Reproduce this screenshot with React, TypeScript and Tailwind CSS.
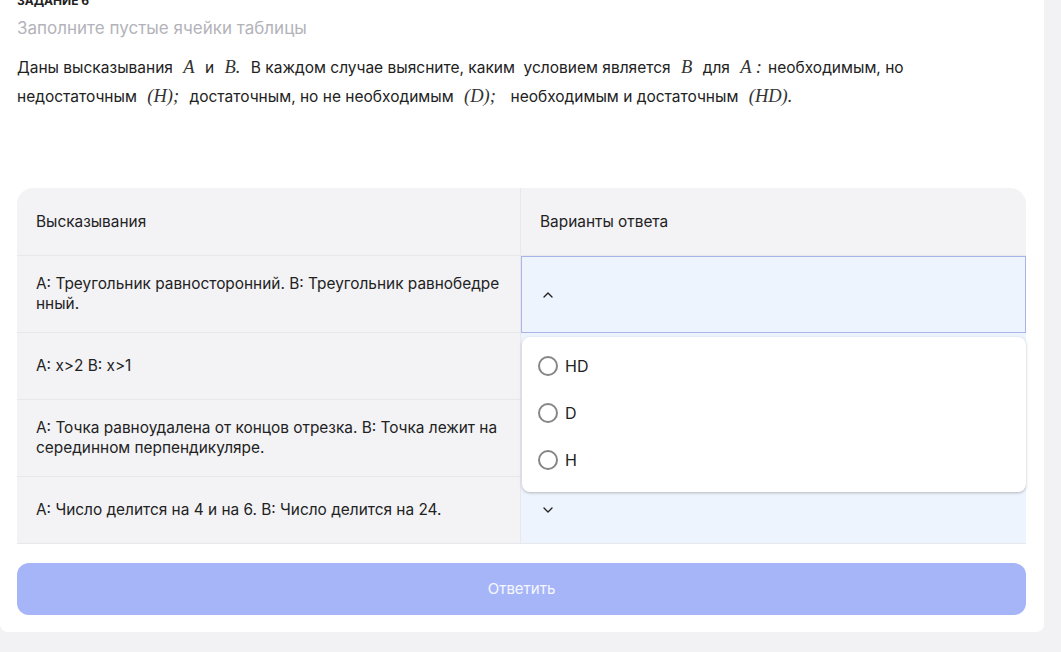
import { ChevronDown, ChevronUp } from 'lucide-react'

const rows = [
  { text: 'А: Треугольник равносторонний. В: Треугольник равнобедренный.', open: true },
  { text: 'А: x>2 В: x>1', open: false },
  { text: 'А: Точка равноудалена от концов отрезка. В: Точка лежит на серединном перпендикуляре.', open: false },
  { text: 'А: Число делится на 4 и на 6. В: Число делится на 24.', open: false }
]

const options = ['HD', 'D', 'H']

const M = ({ children }: { children: React.ReactNode }) => (
  <span className="mx-[6px] font-['Liberation_Serif',serif] text-[18.5px] italic text-[#333]">{children}</span>
)

const App = () => {
  return (
    <div className="min-h-screen overflow-hidden bg-[#f2f2f4] font-['Inter',sans-serif] text-[#222]">
      <div className="-mt-[7px] w-[1044px] rounded-b-lg bg-white px-[17px] pb-[17px]">
        <div className="text-xs font-bold uppercase leading-4 text-[#222]">Задание 6</div>
        <div className="mt-[7px] text-[17px] leading-6 text-[#b3b3ba]">Заполните пустые ячейки таблицы</div>

        <p className="mt-[13px] text-[15.5px] leading-7">
          Даны высказывания <M>A</M> и <M>B.</M> В каждом случае выясните, каким&nbsp; условием является <M>B</M> для <M>A :</M>
          необходимым, но
          <br />
          недостаточным <M>(H);</M> достаточным, но не необходимым <M>(D);</M>&nbsp; необходимым и достаточным <M>(HD).</M>
        </p>

        <div className="relative mt-[77px]">
          <div className="grid grid-cols-[504px_505px] text-[15.4px] leading-5">
            <div className="flex h-[68px] items-center rounded-tl-2xl border-r border-b border-[#e7e7ec] bg-[#f3f3f6] px-[19px]">
              Высказывания
            </div>
            <div className="flex h-[68px] items-center rounded-tr-2xl border-b border-[#e7e7ec] bg-[#f3f3f6] px-[19px]">
              Варианты ответа
            </div>

            {rows.map((row, i) => (
              <div key={i} className="contents">
                <div className="flex min-h-[67px] items-center border-r border-b border-[#e7e7ec] bg-[#f3f3f6] px-[19px] py-[18px]">
                  <span className="break-all">{row.text}</span>
                </div>
                <div
                  className={
                    row.open
                      ? 'flex items-center border border-[#a9b5e8] bg-[#edf4fd] px-[18px]'
                      : 'flex items-center border-b border-[#e7e7ec] bg-[#edf4fd] px-[19px]'
                  }
                >
                  {row.open ? (
                    <ChevronUp size={16} strokeWidth={2} className="text-[#222]" />
                  ) : (
                    <ChevronDown size={16} strokeWidth={2} className="text-[#222]" />
                  )}
                </div>
              </div>
            ))}
          </div>

          {/* open select menu */}
          <div className="absolute top-[149px] left-[505px] flex h-[155px] w-[504px] flex-col gap-[27px] rounded-lg bg-white px-[16px] pt-[19px] shadow-[0_1px_3px_rgba(0,0,0,0.25)]">
            {options.map((opt) => (
              <label key={opt} className="flex h-5 items-center gap-[7px] text-base">
                <span className="h-5 w-5 rounded-full border-2 border-[#868686]" />
                <span>{opt}</span>
              </label>
            ))}
          </div>
        </div>

        <button className="mt-[19px] flex h-[52px] w-[1009px] items-center justify-center rounded-xl bg-[#a5b5f7] text-[15px] text-white/90">
          Ответить
        </button>
      </div>
    </div>
  )
}

export default App
